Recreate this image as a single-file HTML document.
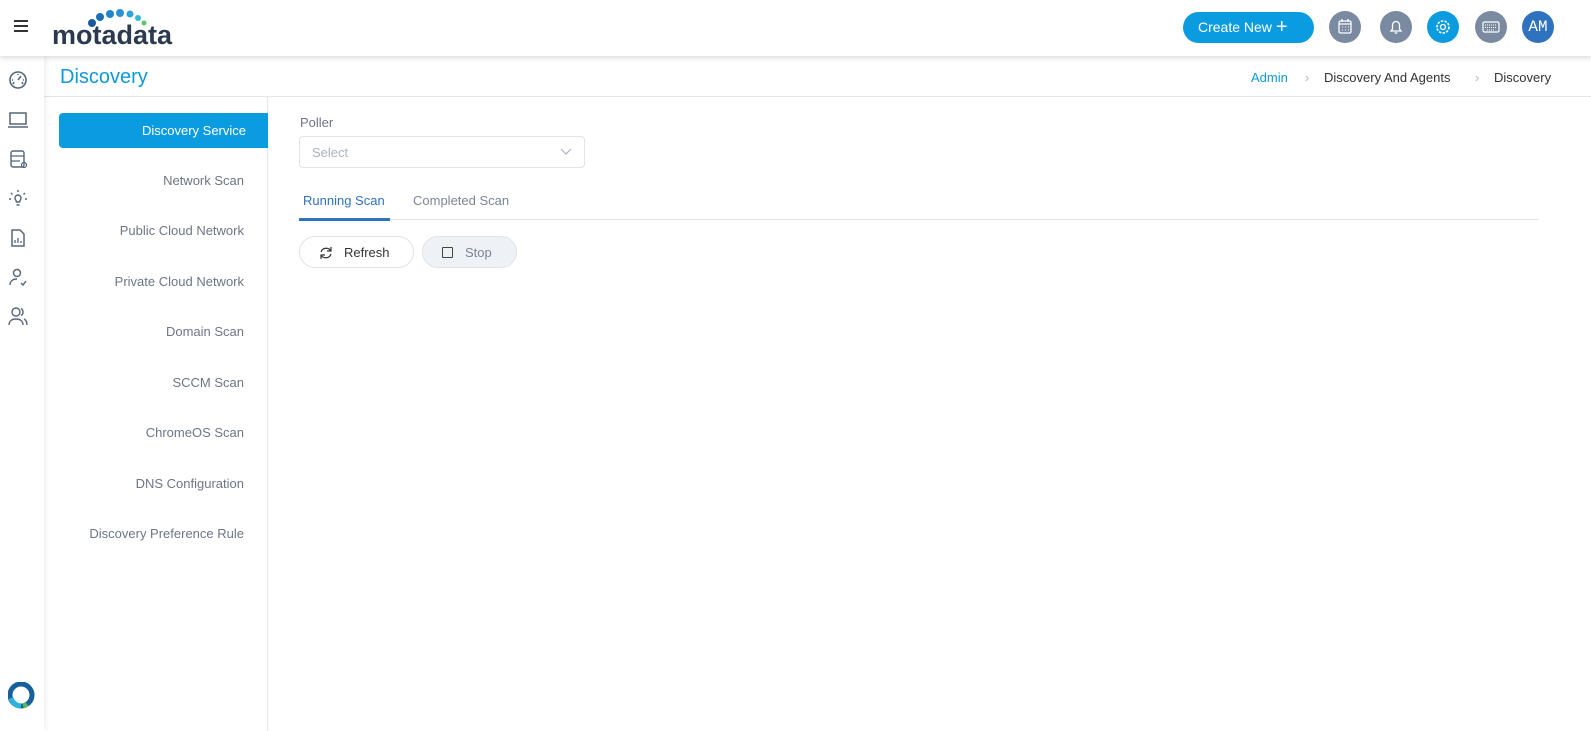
<!DOCTYPE html>
<html><head><meta charset="utf-8"><style>
*{box-sizing:border-box;margin:0;padding:0}
body{width:1591px;height:731px;overflow:hidden;background:#fff;font-family:"Liberation Sans",sans-serif;position:relative;color:#333}
.hdr{position:absolute;left:0;top:0;width:1591px;height:56px;background:#fff;box-shadow:0 2px 5px rgba(0,0,0,.15);z-index:3}
.side{position:absolute;left:0;top:56px;width:44px;height:675px;background:#fff;box-shadow:2px 0 5px rgba(0,0,0,.07);z-index:2}
.side svg{position:absolute;left:8px}
.title{position:absolute;left:60px;top:66px;font-size:20px;color:#0d9ad8}
.bc{position:absolute;top:70px;font-size:13px;color:#333}
.line{position:absolute;left:44px;top:96px;width:1547px;height:1px;background:#e3e6ec}
.menu{position:absolute;left:44px;top:97px;width:224px;height:634px;border-right:1px solid #e3e6ec}
.mi{position:absolute;right:23px;font-size:13px;color:#6b7687;text-align:right}
.act{position:absolute;left:15px;top:16px;width:209px;height:35px;background:#0b9ce0;border-radius:4px 0 0 4px;color:#fff;font-size:13px;text-align:right;padding:10px 22px 0 0}
.circ{position:absolute;top:11px;width:32px;height:32px;border-radius:50%;background:#7a8aa0}
</style></head><body>
<div class="hdr">
 <div style="position:absolute;left:14px;top:20px;width:14px;height:2px;background:#333;box-shadow:0 5px 0 #333,0 10px 0 #333"></div>
 <div style="position:absolute;left:52px;top:20px;font-size:27px;font-weight:bold;color:#2b3a4e;letter-spacing:0px">motadata</div>
 <svg style="position:absolute;left:85px;top:8px" width="80" height="22">
  <circle cx="7" cy="15" r="4" fill="#1a5a9a"/><circle cx="15" cy="9" r="4" fill="#1b6fb8"/><circle cx="25" cy="6" r="4" fill="#1e84cc"/><circle cx="35" cy="5" r="4" fill="#2a90d8"/><circle cx="45" cy="6" r="3.5" fill="#2aa3df"/><circle cx="53" cy="10" r="3" fill="#31b8d8"/><circle cx="59" cy="15" r="2.5" fill="#5cc46a"/>
 </svg>
 <div style="position:absolute;left:1183px;top:12px;width:131px;height:31px;border-radius:16px;background:#0b9ce0;color:#fff;font-size:14px;padding:7px 0 0 15px">Create New <span style="font-size:20px;position:relative;top:1px;line-height:10px">+</span></div>
 <div class="circ" style="left:1329px"><svg width="32" height="32"><rect x="10" y="10" width="12" height="12" rx="1.5" fill="none" stroke="#fff" stroke-width="1.3"/><path d="M10 13h12M13 8v3M19 8v3" stroke="#fff" stroke-width="1.3"/><path d="M13 16h1M16 16h1M19 16h1M13 19h1M16 19h1M19 19h1" stroke="#fff"/></svg></div>
 <div class="circ" style="left:1380px"><svg width="32" height="32"><path d="M11 20h10l-1.5-2v-4a3.5 3.5 0 0 0-7 0v4z M14.5 22h3" fill="none" stroke="#fff" stroke-width="1.3"/></svg></div>
 <div class="circ" style="left:1427px;background:#0b9ce0"><svg width="32" height="32"><circle cx="16" cy="16" r="2.5" fill="none" stroke="#fff" stroke-width="1.3"/><circle cx="16" cy="16" r="6" fill="none" stroke="#fff" stroke-width="1.6" stroke-dasharray="2.4 1.3"/></svg></div>
 <div class="circ" style="left:1475px"><svg width="32" height="32"><rect x="8" y="11" width="16" height="10" rx="1.5" fill="none" stroke="#fff" stroke-width="1.2"/><path d="M10 14h12M10 16.5h12M12 19h8" stroke="#fff" stroke-dasharray="1 1"/></svg></div>
 <div class="circ" style="left:1522px;background:#2f72bd;color:#fff;font-family:'Liberation Mono',monospace;font-size:16px;text-align:center;line-height:32px">AM</div>
</div>
<div class="side">
 <svg style="top:14px" width="20" height="20"><circle cx="10" cy="10" r="8" fill="none" stroke="#56657a" stroke-width="1.6"/><path d="M10 10l3-4M4 10h1M15 10h1M10 4v1M6 12l-1 2M14 12l1 2" stroke="#56657a" stroke-width="1.5"/></svg>
 <svg style="top:54px" width="20" height="20"><rect x="2" y="3" width="16" height="11" fill="none" stroke="#56657a" stroke-width="1.5"/><path d="M0 17h20" stroke="#56657a" stroke-width="1.6"/></svg>
 <svg style="top:93px" width="20" height="20"><rect x="3" y="2" width="13" height="16" rx="2" fill="none" stroke="#56657a" stroke-width="1.4"/><path d="M3 7h13M3 12h9" stroke="#56657a" stroke-width="1.3"/><circle cx="16" cy="16" r="2.5" fill="none" stroke="#56657a" stroke-width="1.2"/></svg>
 <svg style="top:133px" width="20" height="20"><path d="M7 9a3 3 0 1 1 6 0c0 2-1.5 2.5-1.5 4h-3c0-1.5-1.5-2-1.5-4zM8.5 16h3M10 1v2M3 4l1.5 1.5M17 4l-1.5 1.5M1 10h2M17 10h2" fill="none" stroke="#56657a" stroke-width="1.4"/></svg>
 <svg style="top:172px" width="20" height="20"><path d="M4 2h8l4 4v12H4z" fill="none" stroke="#56657a" stroke-width="1.5"/><path d="M7 15v-3M10 15v-5M13 15v-2" stroke="#56657a" stroke-width="1.3"/></svg>
 <svg style="top:211px" width="20" height="20"><circle cx="9" cy="6" r="3.5" fill="none" stroke="#56657a" stroke-width="1.4"/><path d="M2 18c0-4 3-6 7-6M13 16l2 2 3-4" fill="none" stroke="#56657a" stroke-width="1.4"/></svg>
 <svg style="top:250px" width="20" height="20"><circle cx="8" cy="6" r="4" fill="none" stroke="#56657a" stroke-width="1.4"/><path d="M1 19c0-4 3-6 7-6s7 2 7 6M13 2.5a4 4 0 0 1 0 7M16 13c2 1 3 3 3 6" fill="none" stroke="#56657a" stroke-width="1.4"/></svg>
 <svg style="top:626px" width="30" height="30"><circle cx="13" cy="13" r="11" fill="none" stroke="#17609b" stroke-width="5"/><path d="M3 16a11 11 0 0 0 10 8" fill="none" stroke="#2bb4e0" stroke-width="5"/><path d="M19 22a11 11 0 0 1-4 2" fill="none" stroke="#58b85c" stroke-width="5"/></svg>
</div>
<div class="title">Discovery</div>
<div class="bc" style="left:1251px;color:#0d9ad8">Admin</div>
<div class="bc" style="left:1305px;color:#b0b8c4">›</div>
<div class="bc" style="left:1324px">Discovery And Agents</div>
<div class="bc" style="left:1475px;color:#b0b8c4">›</div>
<div class="bc" style="left:1494px">Discovery</div>
<div class="line"></div>
<div class="menu">
 <div class="act">Discovery Service</div>
 <div class="mi" style="top:76px">Network Scan</div>
 <div class="mi" style="top:126px">Public Cloud Network</div>
 <div class="mi" style="top:177px">Private Cloud Network</div>
 <div class="mi" style="top:227px">Domain Scan</div>
 <div class="mi" style="top:278px">SCCM Scan</div>
 <div class="mi" style="top:328px">ChromeOS Scan</div>
 <div class="mi" style="top:379px">DNS Configuration</div>
 <div class="mi" style="top:429px">Discovery Preference Rule</div>
</div>
<div style="position:absolute;left:300px;top:115px;font-size:13px;color:#6b7687">Poller</div>
<div style="position:absolute;left:299px;top:136px;width:286px;height:32px;border:1px solid #dfe3ea;border-radius:4px;font-size:13px;color:#a9b3c1;padding:8px 0 0 12px">Select
 <svg style="position:absolute;right:12px;top:11px" width="12" height="8"><path d="M1 1l5 5 5-5" fill="none" stroke="#a9b3c1" stroke-width="1.2"/></svg></div>
<div style="position:absolute;left:303px;top:193px;font-size:13px;color:#2f72bd">Running Scan</div>
<div style="position:absolute;left:413px;top:193px;font-size:13px;color:#7b8595">Completed Scan</div>
<div style="position:absolute;left:299px;top:219px;width:1240px;height:1px;background:#dfe3ea"></div>
<div style="position:absolute;left:299px;top:218px;width:91px;height:3px;background:#2f72bd"></div>
<div style="position:absolute;left:299px;top:236px;width:115px;height:32px;border:1px solid #dfe3ea;border-radius:16px;font-size:13px;color:#333;padding:8px 0 0 44px">Refresh
 <svg style="position:absolute;left:18px;top:8px" width="16" height="16"><path d="M13 6a5.5 5.5 0 0 0-10 1M3 10a5.5 5.5 0 0 0 10-1M13 2v4h-4M3 14v-4h4" fill="none" stroke="#333" stroke-width="1.2"/></svg></div>
<div style="position:absolute;left:422px;top:236px;width:95px;height:32px;border:1px solid #dfe3ea;border-radius:16px;background:#eef1f6;font-size:13px;color:#7b8595;padding:8px 0 0 42px">Stop
 <div style="position:absolute;left:19px;top:10px;width:11px;height:11px;border:1.3px solid #444;border-radius:1px"></div></div>
</body></html>
